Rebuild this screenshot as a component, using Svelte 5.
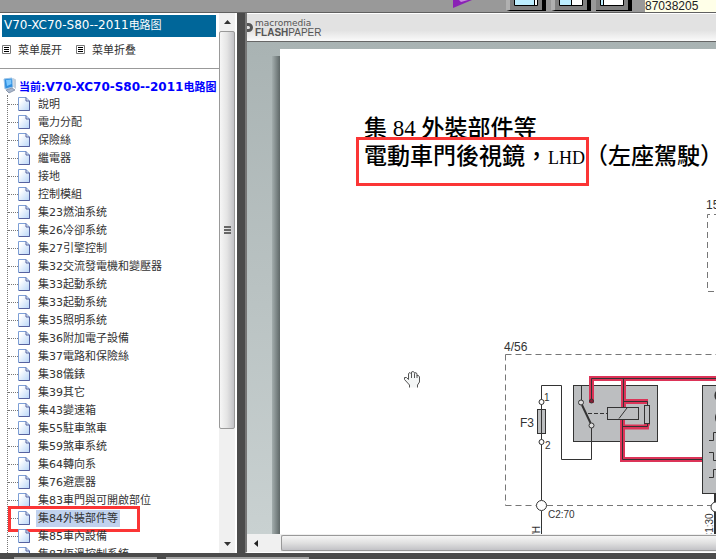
<script lang="ts">
  const code = "V70-XC70-S80--2011";
  const items = [
    "說明",
    "電力分配",
    "保險絲",
    "繼電器",
    "接地",
    "控制模組",
    "集23燃油系统",
    "集26冷卻系统",
    "集27引擎控制",
    "集32交流發電機和變壓器",
    "集33起動系统",
    "集33起動系统",
    "集35照明系统",
    "集36附加電子設備",
    "集37電路和保險絲",
    "集38儀錶",
    "集39其它",
    "集43變速箱",
    "集55駐車煞車",
    "集59煞車系统",
    "集64轉向系",
    "集76避震器",
    "集83車門與可開啟部位",
    "集84外裝部件等",
    "集85車內設備",
    "集87恆溫控制系統",
  ];

  let selected = $state(23);
  let expanded = $state(true);
  let partNumber = $state("87038205");
</script>

<div class="app">
  <header class="toolbar">
    <button class="play" aria-label="Play">
      <svg width="20" height="9" viewBox="0 0 20 9">
        <path d="M0 0H19L0 8Z" fill="#8a22b5" />
        <path d="M6 0H15L8 2Z" fill="#c98be0" />
      </svg>
    </button>
    <div class="views">
      <button class="view" aria-label="Single view">
        <svg width="24" height="6"><path d="M.5 -1V5.500H23.500V-1" fill="#fff" stroke="#000" /><path d="M1 0H20V5H1Z" fill="#bdeeff" /><path d="M20.500 0V5" stroke="#000" /></svg>
      </button>
      <button class="view" aria-label="Split view">
        <svg width="24" height="6"><path d="M.5 -1V5.500H23.500V-1" fill="#fff" stroke="#000" /><path d="M1 0H12V5H1Z" fill="#bdeeff" /><path d="M12.500 0V5" stroke="#000" /></svg>
      </button>
      <button class="view flat" aria-label="Wide view">
        <svg width="24" height="6"><path d="M.5 -1V5.500H23.500V-1" fill="#fff" stroke="#000" /><path d="M1 0H3V5H1Z" fill="#bdeeff" /><path d="M3.500 0V5" stroke="#000" /></svg>
      </button>
    </div>
    <input class="part" aria-label="Part number" bind:value={partNumber} />
  </header>

  <main>
    <aside>
      <div class="menu">
        <h1><span class="code">{code}</span>电路图</h1>
        <div class="actions">
          <button onclick={() => (expanded = true)}>
            <svg width="9" height="9"><path d="M.5 .5H8.500V8.500H.5Z" fill="#fff" stroke="#777" /><path d="M2 2.500H7M2 4.500H7M2 6.500H7" stroke="#000" /></svg>
            菜单展开
          </button>
          <button onclick={() => (expanded = false)}>
            <svg width="9" height="9"><path d="M.5 .5H8.500V8.500H.5Z" fill="#fff" stroke="#777" /><path d="M2 2.500H7M2 4.500H7M2 6.500H7" stroke="#000" /></svg>
            菜单折叠
          </button>
        </div>
        <a class="root" href="#root">
          <svg width="14" height="18" viewBox="0 0 14 18">
            <path d="M1 2L9 1L10 10L2 12Z" fill="#2f8fe0" stroke="#9cc3e6" />
            <path d="M3 3L8 2.500L8.500 7L4 9Z" fill="#7cc8ff" />
            <path d="M10 1L13 2.500V12L10.500 10Z" fill="#c3cfdb" />
            <path d="M3 13L9 11L12 13L6 16Z" fill="#a9b7cc" stroke="#72819b" stroke-width=".7" />
          </svg>
          <span>当前:<span class="code">{code}</span>电路图</span>
        </a>
        {#if expanded}
          <ul>
            {#each items as item, i}
              <li class:selected={i === selected}>
                <a href="#item{i}" onclick={() => (selected = i)}>
                  <svg width="12" height="15" viewBox="0 0 12 15">
                    <defs>
                      <linearGradient id="sheet{i}" x1="0" y1="0" x2="1" y2="1">
                        <stop offset=".2" stop-color="#fff" />
                        <stop offset="1" stop-color="#b7d5f8" />
                      </linearGradient>
                    </defs>
                    <path d="M.5 .5H8L11.500 4V13.500H.5Z" fill="url(#sheet{i})" stroke="#7d9fd6" />
                    <path d="M8 .5V4H11.500V13.500H1" fill="none" stroke="#56629f" />
                  </svg>
                  <span>{item}</span>
                </a>
                {#if i === selected}<div class="mark"></div>{/if}
              </li>
            {/each}
          </ul>
        {/if}
      </div>
      <div class="vscroll">
        <button aria-label="Scroll up"><svg width="7" height="4"><path d="M0 4L3.500 0L7 4Z" fill="#333" /></svg></button>
        <div class="track">
          <div class="thumb"><i></i><i></i><i></i></div>
        </div>
        <button aria-label="Scroll down"><svg width="7" height="4"><path d="M0 0L3.500 4L7 0Z" fill="#333" /></svg></button>
      </div>
    </aside>

    <section class="viewer">
      <div class="brand">
        <svg width="6" height="10"><path d="M0 1.500H1.500A3 3 0 0 1 1.500 7.500H0" fill="none" stroke="#555" stroke-width="3" /></svg>
        <p>
          <span class="maker">macromedia</span>
          <span class="product"><b>FLASH</b>PAPER</span>
        </p>
      </div>
      <div class="desk">
        <div class="shadow"></div>
        <article>
          <h2>集 84 外裝部件等</h2>
          <h2>
            <span class="boxed">電動車門後視鏡，<span class="lhd">LHD</span></span>（左座駕駛）
          </h2>
          <svg class="diagram">
            <g transform="translate(-280 -190)" fill="none" stroke="#333">
              <g stroke="#777" stroke-dasharray="6 4">
                <path d="M505.500 354.500H1200" />
                <path d="M505.500 354.500V505.500" />
                <path d="M505.500 505.500H536M547 505.500H711" />
                <path d="M1200 214.500H707.500V291.500H1200" />
              </g>

              <path d="M541.500 400V385.500H561.500V459.500H591.500V428" />
              <rect x="537.500" y="409.500" width="8" height="24" fill="#bcbec0" />
              <path d="M541.500 404V440M541.500 444V500M541.500 511V540" />
              <circle cx="541.500" cy="402" r="2.500" fill="#fff" />
              <circle cx="541.500" cy="442" r="2.500" fill="#fff" />
              <circle cx="541.500" cy="505.500" r="5" fill="#fff" />

              <rect x="573.500" y="385.500" width="84" height="56" fill="#bcbec0" />
              <rect x="702.500" y="385.500" width="500" height="108" fill="#bcbec0" />

              <g stroke="#dc3458" stroke-width="5">
                <path d="M591.500 403V378.500H1200" />
                <path d="M623.500 378V409M623.500 401.500H648" />
                <path d="M622.500 418V459.500H702M622.500 427H649" />
                <path d="M644 407H650M644 424H650" stroke-width="3" />
              </g>
              <path d="M591.500 401V378.500H1200M623.500 378V407M623.500 401.500H647.500V406" />
              <path d="M622.500 420V459.500H702M622.500 426.500H647.500V423" />
              <rect x="607.500" y="407.500" width="31" height="12" fill="#bcbec0" />
              <path d="M619 418.500L627 408" />
              <rect x="644.500" y="405.500" width="5" height="18" fill="#bcbec0" />
              <path d="M588 413.500H607" stroke-dasharray="4 2" />
              <path d="M581.500 385V400M591.500 428V441" />
              <path d="M582 405L590.500 423" stroke-width="2" />
              <circle cx="581" cy="402.500" r="2.500" fill="#ddd" />
              <circle cx="591.500" cy="425.500" r="2.500" fill="#ddd" />
              <circle cx="591.500" cy="401" r="2" fill="#8c1c34" />

              <path d="M709 440.500H713.500V432.500H718M709 452.500H713.500V460.500H718M709 477.500H713.500V469.500H718" />
              <path d="M719 390A6 6 0 0 0 719 401M718 412Q714 418 718 423" stroke-width="2" />
              <path d="M715.500 493V540" stroke-width="3" />
              <circle cx="716" cy="507" r="5" fill="#fff" />
            </g>
            <g transform="translate(-280 -190)">
              <text x="706" y="209" class="t12">15</text>
              <text x="504" y="351" class="t12">4/56</text>
              <text x="520" y="427" class="t12">F3</text>
              <text x="544" y="401" class="t10">1</text>
              <text x="545" y="449" class="t10">2</text>
              <text x="548" y="518" class="t10">C2:70</text>
              <text class="t10" transform="translate(540 536) rotate(-90)">/H</text>
              <text class="t10" transform="translate(713 540) rotate(-90)">C1:30</text>
            </g>
            <g transform="translate(124 181)" stroke="#555" fill="#f4f6f6">
              <path d="M5.500 16.500V14L.5 8.500V6.500H2.500L4.500 8.500V2.500L6 1.500L7.500 3V1L9 .5L10.500 1.500V2.500L12 1.500L13 3V4.500L14.500 4.500L15.500 6V11L13.500 14V16.500" />
              <path d="M7.500 3V7M10.500 3V7M13 4V7" fill="none" />
            </g>
          </svg>
        </article>
      </div>
      <div class="hscroll">
        <button aria-label="Scroll left"><svg width="4" height="7"><path d="M4 0L0 3.500L4 7Z" fill="#222" /></svg></button>
        <div class="thumb"></div>
      </div>
    </section>
  </main>

  <footer><i></i><i></i></footer>
</div>

<style>
  :global(body) {
    margin: 0;
    overflow: hidden;
  }

  .app {
    display: flex;
    flex-direction: column;
    height: 100vh;
    background: #4b4b4b;
    font-family: "DejaVu Sans", "Noto Sans CJK SC", sans-serif;
    font-size: 11px;
    color: #333;
  }

  button {
    padding: 0;
    border: 0;
    background: none;
    font: inherit;
    color: inherit;
  }

  svg {
    display: block;
    flex: none;
  }

  a {
    color: inherit;
    text-decoration: none;
  }

  .toolbar {
    display: flex;
    justify-content: flex-end;
    align-items: flex-start;
    height: 12px;
    flex: none;
    overflow: hidden;
    background: #999;
    border-bottom: 1px solid #606060;
  }

  .views {
    display: flex;
    gap: 5px;
    margin: 0 13px 0 33px;
  }

  .view {
    width: 40px;
    height: 11px;
    box-sizing: border-box;
    padding-left: 4px;
    background: #808080;
    border-left: 4px solid #b0b0b0;
    border-right: 4px solid #000;
    border-bottom: 1px solid #000;
    display: flex;
    align-items: flex-start;
  }

  .flat {
    width: 36px;
    border-left: 0;
  }

  .part {
    width: 71px;
    height: 12px;
    box-sizing: border-box;
    padding: 0;
    border: 0;
    background: #ffffe8;
    font: 12px/12px "Liberation Sans", sans-serif;
    color: #222;
  }

  main {
    display: flex;
    flex: 1;
    min-height: 0;
  }

  aside {
    display: flex;
    width: 237px;
    flex: none;
    box-sizing: border-box;
    padding-right: 2px;
    background: #fff;
  }

  .menu {
    flex: 1;
    min-width: 0;
    overflow: hidden;
    white-space: nowrap;
  }

  h1 {
    height: 22px;
    margin: 2px 3px 0 2px;
    padding-left: 2px;
    background: #069;
    color: #fff;
    font-size: 11px;
    font-weight: 400;
    line-height: 21px;
  }

  .code {
    font-size: 12px;
  }

  .actions {
    display: flex;
    gap: 14px;
    height: 31px;
    padding: 0 2px;
    border-bottom: 1px solid #999;
  }

  .actions button {
    display: flex;
    align-items: center;
    gap: 7px;
    height: 24px;
  }

  .root {
    display: flex;
    align-items: center;
    gap: 2px;
    height: 18px;
    margin-top: 8px;
    padding-left: 3px;
    color: #00f;
    font-weight: 700;
  }

  ul {
    margin: 0 0 0 7px;
    padding: 0;
    list-style: none;
    border-left: 1px dotted #777;
  }

  li {
    position: relative;
  }

  li a {
    display: flex;
    align-items: center;
    gap: 6px;
    height: 18px;
  }

  li a::before {
    content: "";
    width: 10px;
    margin-right: -6px;
    border-top: 1px dotted #777;
  }

  li span {
    padding: 0 2px;
    line-height: 17px;
  }

  .selected span {
    background: #c1d2ee;
  }

  .mark,
  .boxed::after {
    position: absolute;
    border: 3px solid #fb3535;
    pointer-events: none;
  }

  .mark {
    top: -3px;
    left: 0;
    width: 126px;
    height: 20px;
  }

  .vscroll {
    display: flex;
    flex-direction: column;
    width: 16px;
    background: #f0f0f0;
  }

  .vscroll button {
    display: flex;
    align-items: center;
    justify-content: center;
    height: 18px;
  }

  .track {
    flex: 1;
  }

  .vscroll .thumb {
    display: flex;
    flex-direction: column;
    align-items: center;
    justify-content: center;
    gap: 1px;
    height: 79%;
    box-sizing: border-box;
    border: 1px solid #999;
    border-radius: 2px;
    background: linear-gradient(90deg, #f6f6f6, #e4e4e4 50%, #c2c2c6);
  }

  .thumb i {
    width: 7px;
    height: 2px;
    background: #666;
  }

  .viewer {
    display: flex;
    flex-direction: column;
    flex: 1;
    min-width: 0;
    margin-left: 8px;
    border-left: 2px solid #777;
    border-bottom: 1px solid #fff;
  }

  .brand {
    display: flex;
    align-items: center;
    gap: 2px;
    height: 27px;
    flex: none;
    border-top: 1px solid #fff;
    border-bottom: 1px solid #666;
    background: linear-gradient(#e2e2e2 60%, #fafafa);
    color: #555;
  }

  .brand p {
    display: flex;
    flex-direction: column;
    margin: 0;
  }

  .maker {
    font-size: 9px;
    line-height: 9px;
  }

  .product {
    font: 10px/9px "Liberation Sans", sans-serif;
  }

  .desk {
    display: flex;
    flex: 1;
    min-height: 0;
    padding: 7px 0 0 25px;
    background: linear-gradient(#a9b3b3, #c9d1d1);
  }

  .shadow {
    width: 8px;
    flex: none;
    margin-top: 7px;
    background: linear-gradient(90deg, #a3adad, #5f6868);
  }

  article {
    display: flex;
    flex-direction: column;
    flex: 1;
    min-width: 0;
    padding-top: 66px;
    overflow: hidden;
    background: #fff;
    color: #000;
  }

  h2 {
    margin: 0 0 0 84px;
    font: 500 23px/28px "Liberation Serif", "Noto Sans CJK TC", serif;
    white-space: nowrap;
  }

  .boxed {
    position: relative;
  }

  .boxed::after {
    content: "";
    inset: -7px -4px -17px -8px;
  }

  .lhd {
    font-size: 18px;
  }

  .diagram {
    flex: 1;
    width: 100%;
    min-height: 0;
    margin-top: 18px;
  }

  text {
    fill: #333;
    font-family: "Liberation Sans", sans-serif;
  }

  .t12 {
    font-size: 12px;
  }

  .t10 {
    font-size: 10px;
  }

  .hscroll {
    display: flex;
    height: 18px;
    flex: none;
    box-sizing: border-box;
    padding: 1px 0;
    background: #f0f0f0;
  }

  .hscroll button {
    width: 34px;
    padding-left: 7px;
  }

  .hscroll .thumb {
    flex: 1;
    border: 1px solid #999;
    border-right: 0;
    border-radius: 2px 0 0 2px;
    background: linear-gradient(#f6f6f6, #e0e0e0 50%, #c2c2c6);
  }

  footer {
    display: flex;
    align-items: flex-end;
    gap: 9px;
    height: 6px;
    flex: none;
    padding-left: 14px;
  }

  footer i {
    width: 143px;
    height: 2px;
    background: #a3a3a3;
  }
</style>
